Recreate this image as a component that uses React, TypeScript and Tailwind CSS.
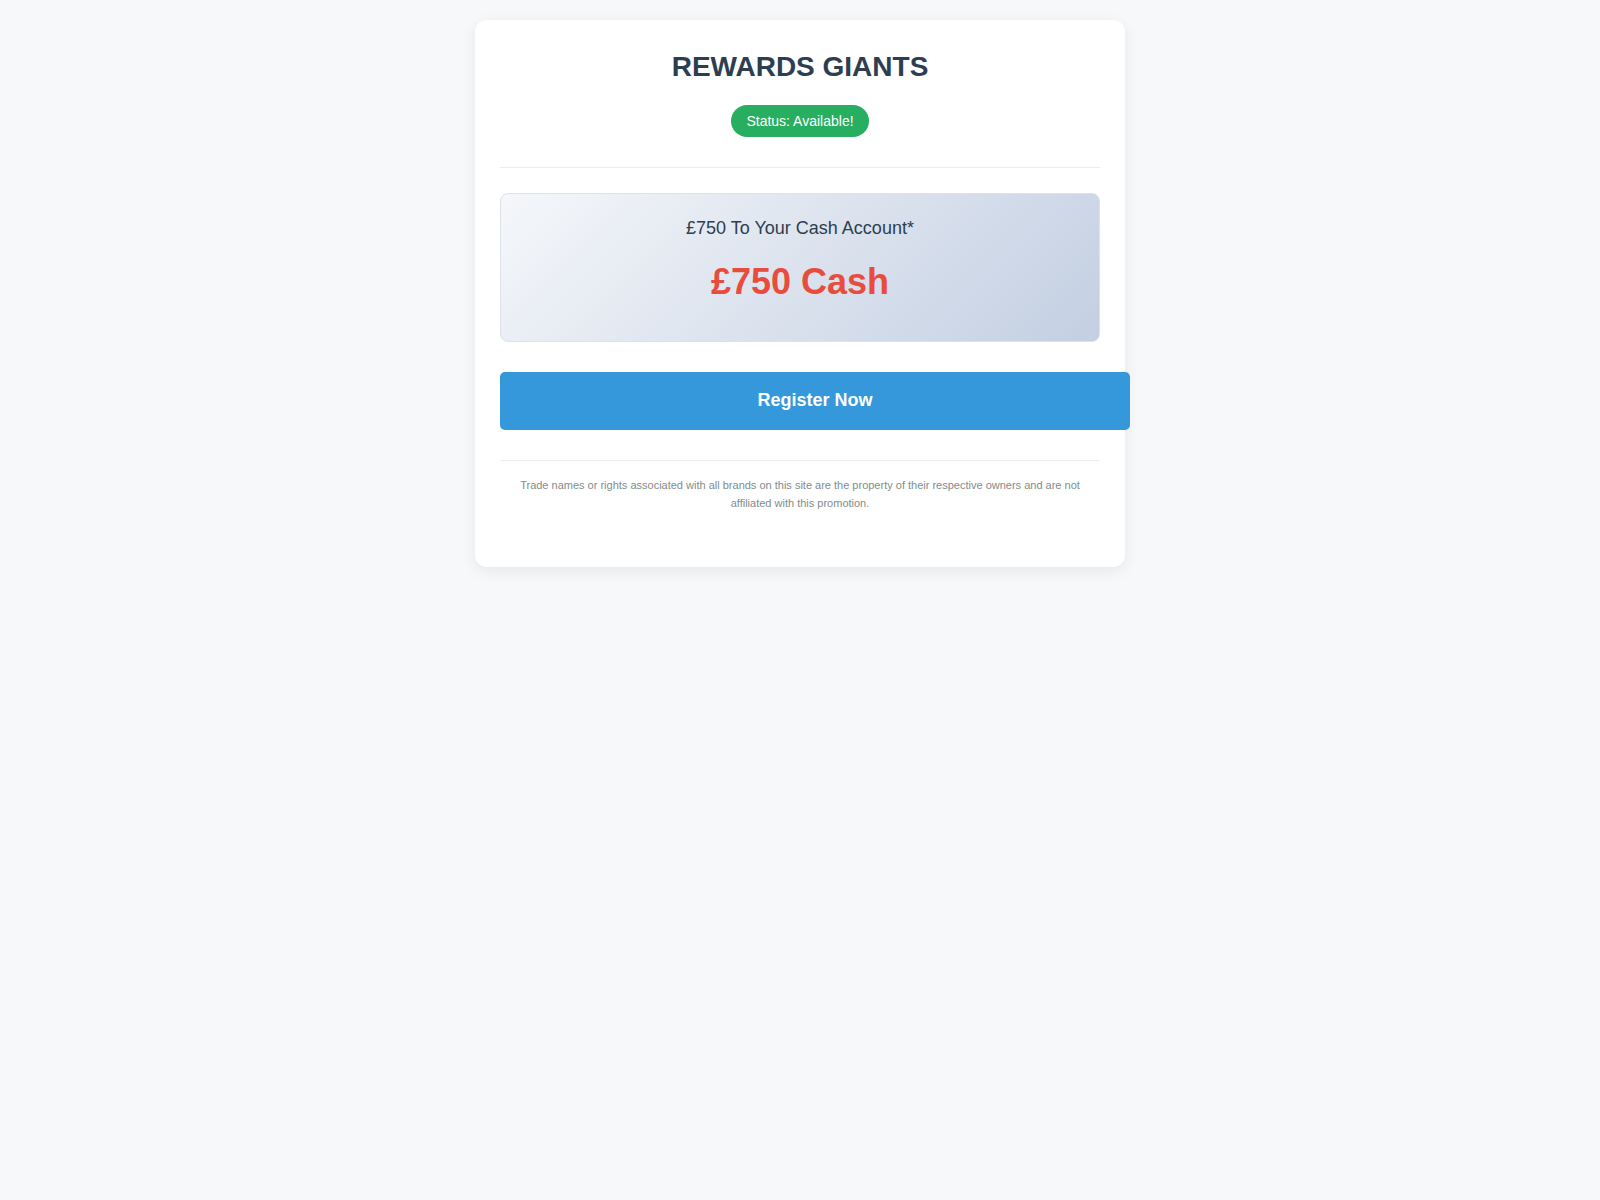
export default function App() {
  return (
    <div className="min-h-screen bg-[#f7f8fa] pt-[20px] font-['Liberation_Sans',Arial,sans-serif] text-[#2c3e50]">
      <div className="mx-auto w-[650px] rounded-[12px] bg-white p-[25px] shadow-[0_4px_16px_rgba(0,0,0,0.07)]">
        <div className="border-b border-[#ececec] pb-[30px] text-center">
          <h1 className="text-[28px] font-bold leading-[44.8px] text-[#2c3e50]">REWARDS GIANTS</h1>
          <div className="mt-[15px] flex justify-center">
            <span className="rounded-[20px] bg-[#27ae60] px-[15px] py-[5px] text-[14px] leading-[22px] text-white">
              Status: Available!
            </span>
          </div>
        </div>

        <div className="mt-[25px] rounded-[8px] border border-[#dde2ea] bg-linear-135 from-[#f5f7fa] to-[#c3cfe2] px-[20px] pb-[21px] pt-[20px] text-center">
          <p className="mb-[10px] text-[18px] leading-[28.8px] text-[#2c3e50]">£750 To Your Cash Account*</p>
          <p className="my-[10px] text-[36px] font-bold leading-[57.6px] text-[#e74c3c]">£750 Cash</p>
        </div>

        <button className="mt-[30px] block w-[630px] rounded-[5px] bg-[#3498db] px-[15px] py-[18px] text-center text-[18px] font-bold leading-[21.5px] text-white">
          Register Now
        </button>

        <div className="mt-[30px] border-t border-[#ececec] pb-[30px] pt-[15px] text-center">
          <p className="text-[11px] leading-[18px] text-[#7f8c8d]">
            Trade names or rights associated with all brands on this site are the property of their respective owners and are not affiliated with this promotion.
          </p>
        </div>
      </div>
    </div>
  );
}
